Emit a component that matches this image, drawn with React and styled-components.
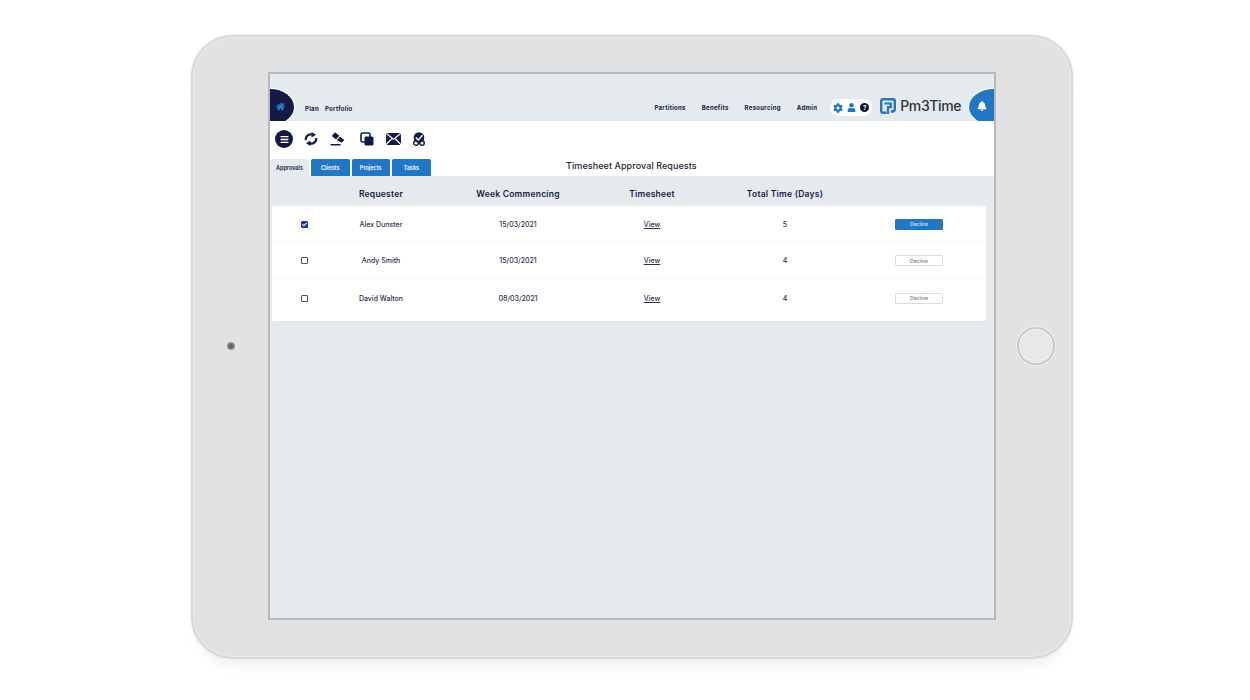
import React from 'react'
import styled, { createGlobalStyle } from 'styled-components'
import { FaHome, FaBell, FaCog, FaUser, FaBars, FaCheck } from 'react-icons/fa'

const navy = '#121a45'
const blue = '#2277c4'
const mist = '#e5eaee'
const columns = '64px 90px 184px 84px 182px 86px'

const rows = [
    { name: 'Alex Dunster', week: '15/03/2021', days: 5, selected: true, height: 36 },
    { name: 'Andy Smith', week: '15/03/2021', days: 4, height: 37 },
    { name: 'David Walton', week: '08/03/2021', days: 4, height: 37 },
]

function Logo() {
    return (
        <svg width="16" height="16" viewBox="0 0 16 16">
            <path fill="none" stroke="#2277c4" strokeWidth="2.400" d="M6.500 14.800H3a1.800 1.800 0 0 1-1.800-1.800V3A1.800 1.800 0 0 1 3 1.200h10A1.800 1.800 0 0 1 14.800 3v8a2.500 2.500 0 0 1-2.500 2.500h-1.500" />
            <path fill="none" stroke="#2277c4" strokeWidth="2.200" d="M4.500 5.500h6.300v3.600H8V16" />
        </svg>
    )
}

function SyncIcon() {
    return (
        <svg width="14" height="14" viewBox="0 0 14 14">
            <path fill="none" stroke={navy} strokeWidth="2.300" d="M1.700 8A5 5 0 0 1 8 2.600M12.300 6A5 5 0 0 1 6 11.400" />
            <path fill={navy} d="M7.500 0 12 2.800 7.500 5.600zM6.500 8.400 2 11.200l4.500 2.800z" />
        </svg>
    )
}

function EraserIcon() {
    return (
        <svg width="15" height="14" viewBox="0 0 15 14">
            <path fill={navy} d="M5 0.300 9.300 3.800 6.100 7.400 1.800 3.900z" />
            <path fill={navy} d="M10 4.600 14.300 8.100 11.800 10.800 6.900 8.200z" />
            <rect x="0.500" y="12" width="10" height="1.500" fill={navy} />
        </svg>
    )
}

function CloneIcon() {
    return (
        <svg width="14" height="14" viewBox="0 0 14 14">
            <rect x="1" y="1" width="9" height="9" rx="1.500" fill="none" stroke={navy} strokeWidth="1.600" />
            <rect x="4.500" y="4.500" width="9" height="9" rx="1.500" fill={navy} />
        </svg>
    )
}

function CrossedMail() {
    return (
        <svg width="15" height="12" viewBox="0 0 15 12">
            <rect width="15" height="12" rx="0.500" fill={navy} />
            <path d="M0 0.300 7.500 6.300 15 0.300M0 11.700 6 5.500M15 11.700 9 5.500" fill="none" stroke="#fff" strokeWidth="1.200" />
        </svg>
    )
}

function CheckBadge() {
    return (
        <svg width="12" height="14" viewBox="0 0 12 14">
            <circle cx="6" cy="5.500" r="5.300" fill={navy} />
            <circle cx="3" cy="11" r="2.300" fill="none" stroke={navy} strokeWidth="1.400" />
            <circle cx="9" cy="11" r="2.300" fill="none" stroke={navy} strokeWidth="1.400" />
            <path d="M2.800 5.600 5.200 8 9.600 3.200" fill="none" stroke="#fff" strokeWidth="1.400" />
        </svg>
    )
}

function App() {
    return (
        <>
            <GlobalStyle />
            <Device>
                <Bezel>
                    <Camera />
                </Bezel>
                <Screen>
                    <Header>
                        <HomeBlob>
                            <FaHome size={9} color="#2a86d8" />
                        </HomeBlob>
                        <LeftNav>
                            <NavLink>Plan</NavLink>
                            <NavLink>Portfolio</NavLink>
                        </LeftNav>
                        <RightNav>
                            <NavLink>Partitions</NavLink>
                            <NavLink>Benefits</NavLink>
                            <NavLink>Resourcing</NavLink>
                            <NavLink>Admin</NavLink>
                        </RightNav>
                        <UserPill>
                            <FaCog size={10} color={blue} />
                            <FaUser size={9} color={blue} />
                            <HelpDot>?</HelpDot>
                        </UserPill>
                        <Brand>
                            <Logo />
                            <BrandName>Pm3Time</BrandName>
                        </Brand>
                        <BellBlob>
                            <FaBell size={10} color="#fff" />
                        </BellBlob>
                    </Header>

                    <Toolbar>
                        <MenuButton>
                            <FaBars size={9} color="#fff" />
                        </MenuButton>
                        <Tool>
                            <SyncIcon />
                        </Tool>
                        <Tool>
                            <EraserIcon />
                        </Tool>
                        <Tool $gap={4}>
                            <CloneIcon />
                        </Tool>
                        <Tool>
                            <CrossedMail />
                        </Tool>
                        <Tool>
                            <CheckBadge />
                        </Tool>
                    </Toolbar>

                    <TabRow>
                        <Tabs>
                            <Tab $active>Approvals</Tab>
                            <Tab>Clients</Tab>
                            <Tab>Projects</Tab>
                            <Tab>Tasks</Tab>
                        </Tabs>
                        <PageTitle>Timesheet Approval Requests</PageTitle>
                    </TabRow>

                    <Content>
                        <HeadRow>
                            <span />
                            <HeadCell>Requester</HeadCell>
                            <HeadCell>Week Commencing</HeadCell>
                            <HeadCell>Timesheet</HeadCell>
                            <HeadCell>Total Time (Days)</HeadCell>
                        </HeadRow>
                        <Card>
                            {rows.map((row) => (
                                <Row key={row.name} $height={row.height}>
                                    <Cell>
                                        <Check $on={row.selected}>
                                            {row.selected && <FaCheck size={5} color="#fff" />}
                                        </Check>
                                    </Cell>
                                    <Cell>{row.name}</Cell>
                                    <Cell>{row.week}</Cell>
                                    <Cell>
                                        <ViewLink>View</ViewLink>
                                    </Cell>
                                    <Cell>{row.days}</Cell>
                                    <Cell>
                                        <DeclineButton $on={row.selected}>Decline</DeclineButton>
                                    </Cell>
                                </Row>
                            ))}
                        </Card>
                    </Content>
                </Screen>
                <HomeBezel>
                    <HomeButton />
                </HomeBezel>
            </Device>
        </>
    )
}

export default App

const GlobalStyle = createGlobalStyle`
    html, body {
        margin: 0;
        background: #fff;
    }
    body {
        height: 700px;
        overflow: hidden;
        font-family: Inter, "Liberation Sans", sans-serif;
        color: ${navy};
    }
`

const Device = styled.div`
    display: flex;
    box-sizing: border-box;
    width: 882px;
    height: 624px;
    margin: 35px 0 0 191px;
    padding-top: 35px;
    background: #e2e2e2;
    border: 2px solid #d9d9d9;
    border-radius: 42px;
    box-shadow: 0 0 0 1px #f0f0f0, inset 0 0 0 1px #ececec, 0 14px 18px -12px rgba(0, 0, 0, 0.1);
`

const Bezel = styled.div`
    display: flex;
    flex: 0 0 75px;
    align-items: center;
    justify-content: center;
    box-sizing: border-box;
    height: 548px;
`

const HomeBezel = styled(Bezel)`
    padding-left: 5px;
`

const Camera = styled.div`
    width: 8px;
    height: 8px;
    border-radius: 50%;
    background: radial-gradient(circle, #666 0 30%, #999 65%, #d0d0d0 100%);
`

const HomeButton = styled.div`
    box-sizing: border-box;
    flex-shrink: 0;
    width: 38px;
    height: 38px;
    border-radius: 50%;
    background: #e8e8e8;
    border: 2px solid #c9c9c9;
    box-shadow: 0 0 0 1px #efefef, inset 0 0 0 1px #f6f6f6;
`

const Screen = styled.div`
    display: flex;
    flex-direction: column;
    flex-shrink: 0;
    box-sizing: border-box;
    width: 728px;
    height: 548px;
    border: 2px solid #b6b8b9;
    background: ${mist};
`

const Header = styled.div`
    display: flex;
    align-items: center;
    height: 47px;
    overflow: hidden;
    flex-shrink: 0;
`

const HomeBlob = styled.div`
    display: flex;
    align-items: center;
    justify-content: center;
    align-self: flex-end;
    box-sizing: border-box;
    width: 24px;
    height: 36px;
    margin-bottom: -4px;
    padding: 0 3px 2px 0;
    background: ${navy};
    border-radius: 0 24px 24px 0 / 0 18px 18px 0;
    box-shadow: 0 0 0 1px #fff;
`

const LeftNav = styled.nav`
    display: flex;
    gap: 6px;
    margin: 22px 0 0 11px;
`

const RightNav = styled.nav`
    display: flex;
    gap: 16px;
    margin: 21px 0 0 auto;
`

const NavLink = styled.span`
    font-size: 6px;
    font-weight: 700;
    letter-spacing: 0.3px;
    line-height: 8px;
`

const UserPill = styled.div`
    display: flex;
    align-items: center;
    gap: 4px;
    box-sizing: border-box;
    width: 42px;
    height: 17px;
    margin: 20px 0 0 13px;
    padding-left: 3px;
    border-radius: 9px;
    background: #fff;
`

const HelpDot = styled.span`
    display: flex;
    align-items: center;
    justify-content: center;
    width: 9px;
    height: 9px;
    border-radius: 50%;
    background: #0e1430;
    color: #fff;
    font-size: 6px;
    font-weight: 700;
`

const Brand = styled.div`
    display: flex;
    align-items: center;
    gap: 4px;
    margin: 16px 0 0 8px;
`

const BrandName = styled.span`
    font-size: 14px;
    font-weight: 500;
    letter-spacing: -0.4px;
    color: #2b3440;
`

const BellBlob = styled.div`
    display: flex;
    align-items: center;
    justify-content: center;
    align-self: flex-end;
    box-sizing: border-box;
    width: 25px;
    height: 36px;
    margin: 0 0 -4px 8px;
    padding: 0 0 2px 1px;
    background: ${blue};
    border-radius: 25px 0 0 25px / 18px 0 0 18px;
    box-shadow: 0 0 0 1px #fff;
`

const Toolbar = styled.div`
    display: flex;
    align-items: center;
    flex-shrink: 0;
    height: 36px;
    padding-left: 5px;
    background: #fff;
`

const MenuButton = styled.div`
    display: flex;
    align-items: center;
    justify-content: center;
    width: 18px;
    height: 18px;
    margin-right: 5px;
    border-radius: 50%;
    background: ${navy};
`

const Tool = styled.div`
    display: flex;
    align-items: center;
    justify-content: center;
    width: 26px;
    margin-left: ${(p) => p.$gap || 0}px;
`

const TabRow = styled.div`
    display: flex;
    align-items: flex-end;
    flex-shrink: 0;
    height: 19px;
    background: #fff;
`

const Tabs = styled.div`
    display: flex;
    gap: 2px;
    width: 161px;
`

const Tab = styled.div`
    display: flex;
    align-items: center;
    justify-content: center;
    width: ${(p) => (p.$active ? '39px' : '38.500px')};
    height: 17px;
    border-radius: 2px 2px 0 0;
    background: ${(p) => (p.$active ? mist : blue)};
    color: ${(p) => (p.$active ? navy : '#fff')};
    font-size: 5.500px;
    font-weight: 600;
`

const PageTitle = styled.h1`
    align-self: center;
    margin: 0 0 2px 135px;
    font-size: 9px;
    font-weight: 500;
    letter-spacing: 0.08px;
    color: #1c2233;
    white-space: nowrap;
`

const Content = styled.main`
    flex: 1;
    padding: 0 8px 0 2px;
    background: ${mist};
`

const HeadRow = styled.div`
    display: grid;
    grid-template-columns: ${columns};
    align-items: center;
    box-sizing: border-box;
    height: 30px;
    padding-top: 6px;
`

const HeadCell = styled.div`
    text-align: center;
    font-size: 8.500px;
    font-weight: 600;
    letter-spacing: 0.25px;
    white-space: nowrap;
`

const Card = styled.section`
    padding-bottom: 5px;
    background: #fff;
    border-radius: 2px;
`

const Row = styled.div`
    display: grid;
    grid-template-columns: ${columns};
    align-items: center;
    box-sizing: border-box;
    height: ${(p) => p.$height}px;
    padding-top: 1px;
    border-bottom: 1px solid #f8f8f8;

    &:last-child {
        border-bottom: none;
    }
`

const Cell = styled.div`
    display: flex;
    justify-content: center;
    font-size: 7px;
    font-weight: 500;
    color: #2a3050;
    white-space: nowrap;
`

const Check = styled.span`
    display: flex;
    align-items: center;
    justify-content: center;
    box-sizing: border-box;
    width: 7px;
    height: 7px;
    border-radius: 1px;
    background: ${(p) => (p.$on ? '#1736b0' : '#fff')};
    border: 1px solid ${(p) => (p.$on ? '#1736b0' : '#4a5068')};
`

const ViewLink = styled.a`
    text-decoration: underline;
    color: #2a3050;
`

const DeclineButton = styled.button`
    box-sizing: border-box;
    width: 48px;
    height: 11px;
    padding: 0;
    border-radius: 1px;
    border: 1px solid ${(p) => (p.$on ? blue : '#dcdcdc')};
    background: ${(p) => (p.$on ? blue : '#fff')};
    color: ${(p) => (p.$on ? '#dce9f6' : '#777')};
    font-family: inherit;
    font-size: 5px;
    font-weight: 500;
`
